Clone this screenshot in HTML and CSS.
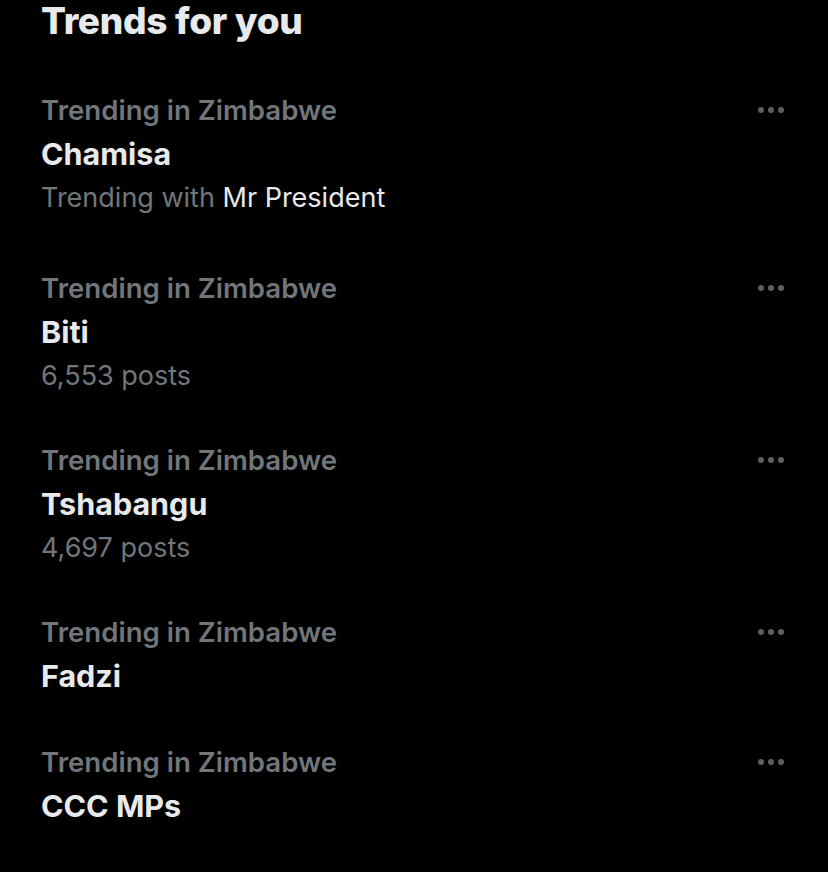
FILE: index.html
```html
<!DOCTYPE html>
<html>
<head>
<meta charset="utf-8">
<link rel="stylesheet" href="styles.css">
</head>
<body>
<div class="page">
  <h1 class="title">Trends for you</h1>
  <ul class="trends">
    <li class="trend trend-tall">
      <div class="info">
        <div class="cat">Trending in Zimbabwe</div>
        <div class="name">Chamisa</div>
        <div class="meta">Trending with <span class="with">Mr President</span></div>
      </div>
      <div class="more"><span></span><span></span><span></span></div>
    </li>
    <li class="trend">
      <div class="info">
        <div class="cat">Trending in Zimbabwe</div>
        <div class="name">Biti</div>
        <div class="meta">6,553 posts</div>
      </div>
      <div class="more"><span></span><span></span><span></span></div>
    </li>
    <li class="trend">
      <div class="info">
        <div class="cat">Trending in Zimbabwe</div>
        <div class="name">Tshabangu</div>
        <div class="meta">4,697 posts</div>
      </div>
      <div class="more"><span></span><span></span><span></span></div>
    </li>
    <li class="trend trend-short">
      <div class="info">
        <div class="cat">Trending in Zimbabwe</div>
        <div class="name">Fadzi</div>
      </div>
      <div class="more"><span></span><span></span><span></span></div>
    </li>
    <li class="trend">
      <div class="info">
        <div class="cat">Trending in Zimbabwe</div>
        <div class="name">CCC MPs</div>
      </div>
      <div class="more"><span></span><span></span><span></span></div>
    </li>
  </ul>
</div>
</body>
</html>
```
FILE: styles.css
```css
html, body {
  margin: 0;
  padding: 0;
  background: #000;
}
body {
  width: 828px;
  height: 872px;
  overflow: hidden;
  font-family: Inter, "Noto Sans", sans-serif;
  color: #e7e9ea;
}
.page {
  padding: 0 44px 0 41px;
}
.title {
  margin: 0;
  font-size: 37px;
  font-weight: 800;
  line-height: 42px;
  letter-spacing: -0.3px;
  color: #e7e9ea;
}
.trends {
  list-style: none;
  margin: 46px 0 0;
  padding: 0;
  display: flex;
  flex-direction: column;
  gap: 40px;
}
.trend {
  display: flex;
  justify-content: space-between;
  align-items: flex-start;
}
.trend-tall {
  margin-bottom: 6px;
}
.trend-short {
  margin-bottom: 2px;
}
.info {
  display: flex;
  flex-direction: column;
}
.cat, .name, .meta {
  line-height: 44px;
}
.cat {
  font-size: 27.6px;
  font-weight: 600;
  color: #71767b;
}
.name {
  font-size: 30.5px;
  font-weight: 700;
  color: #e7e9ea;
}
.meta {
  font-size: 27px;
  font-weight: 400;
  color: #71767b;
}
.with {
  color: #e7e9ea;
}
.more {
  display: flex;
  gap: 4px;
  height: 44px;
  align-items: center;
}
.more span {
  width: 6px;
  height: 6px;
  border-radius: 50%;
  background: #5b6064;
}
```
